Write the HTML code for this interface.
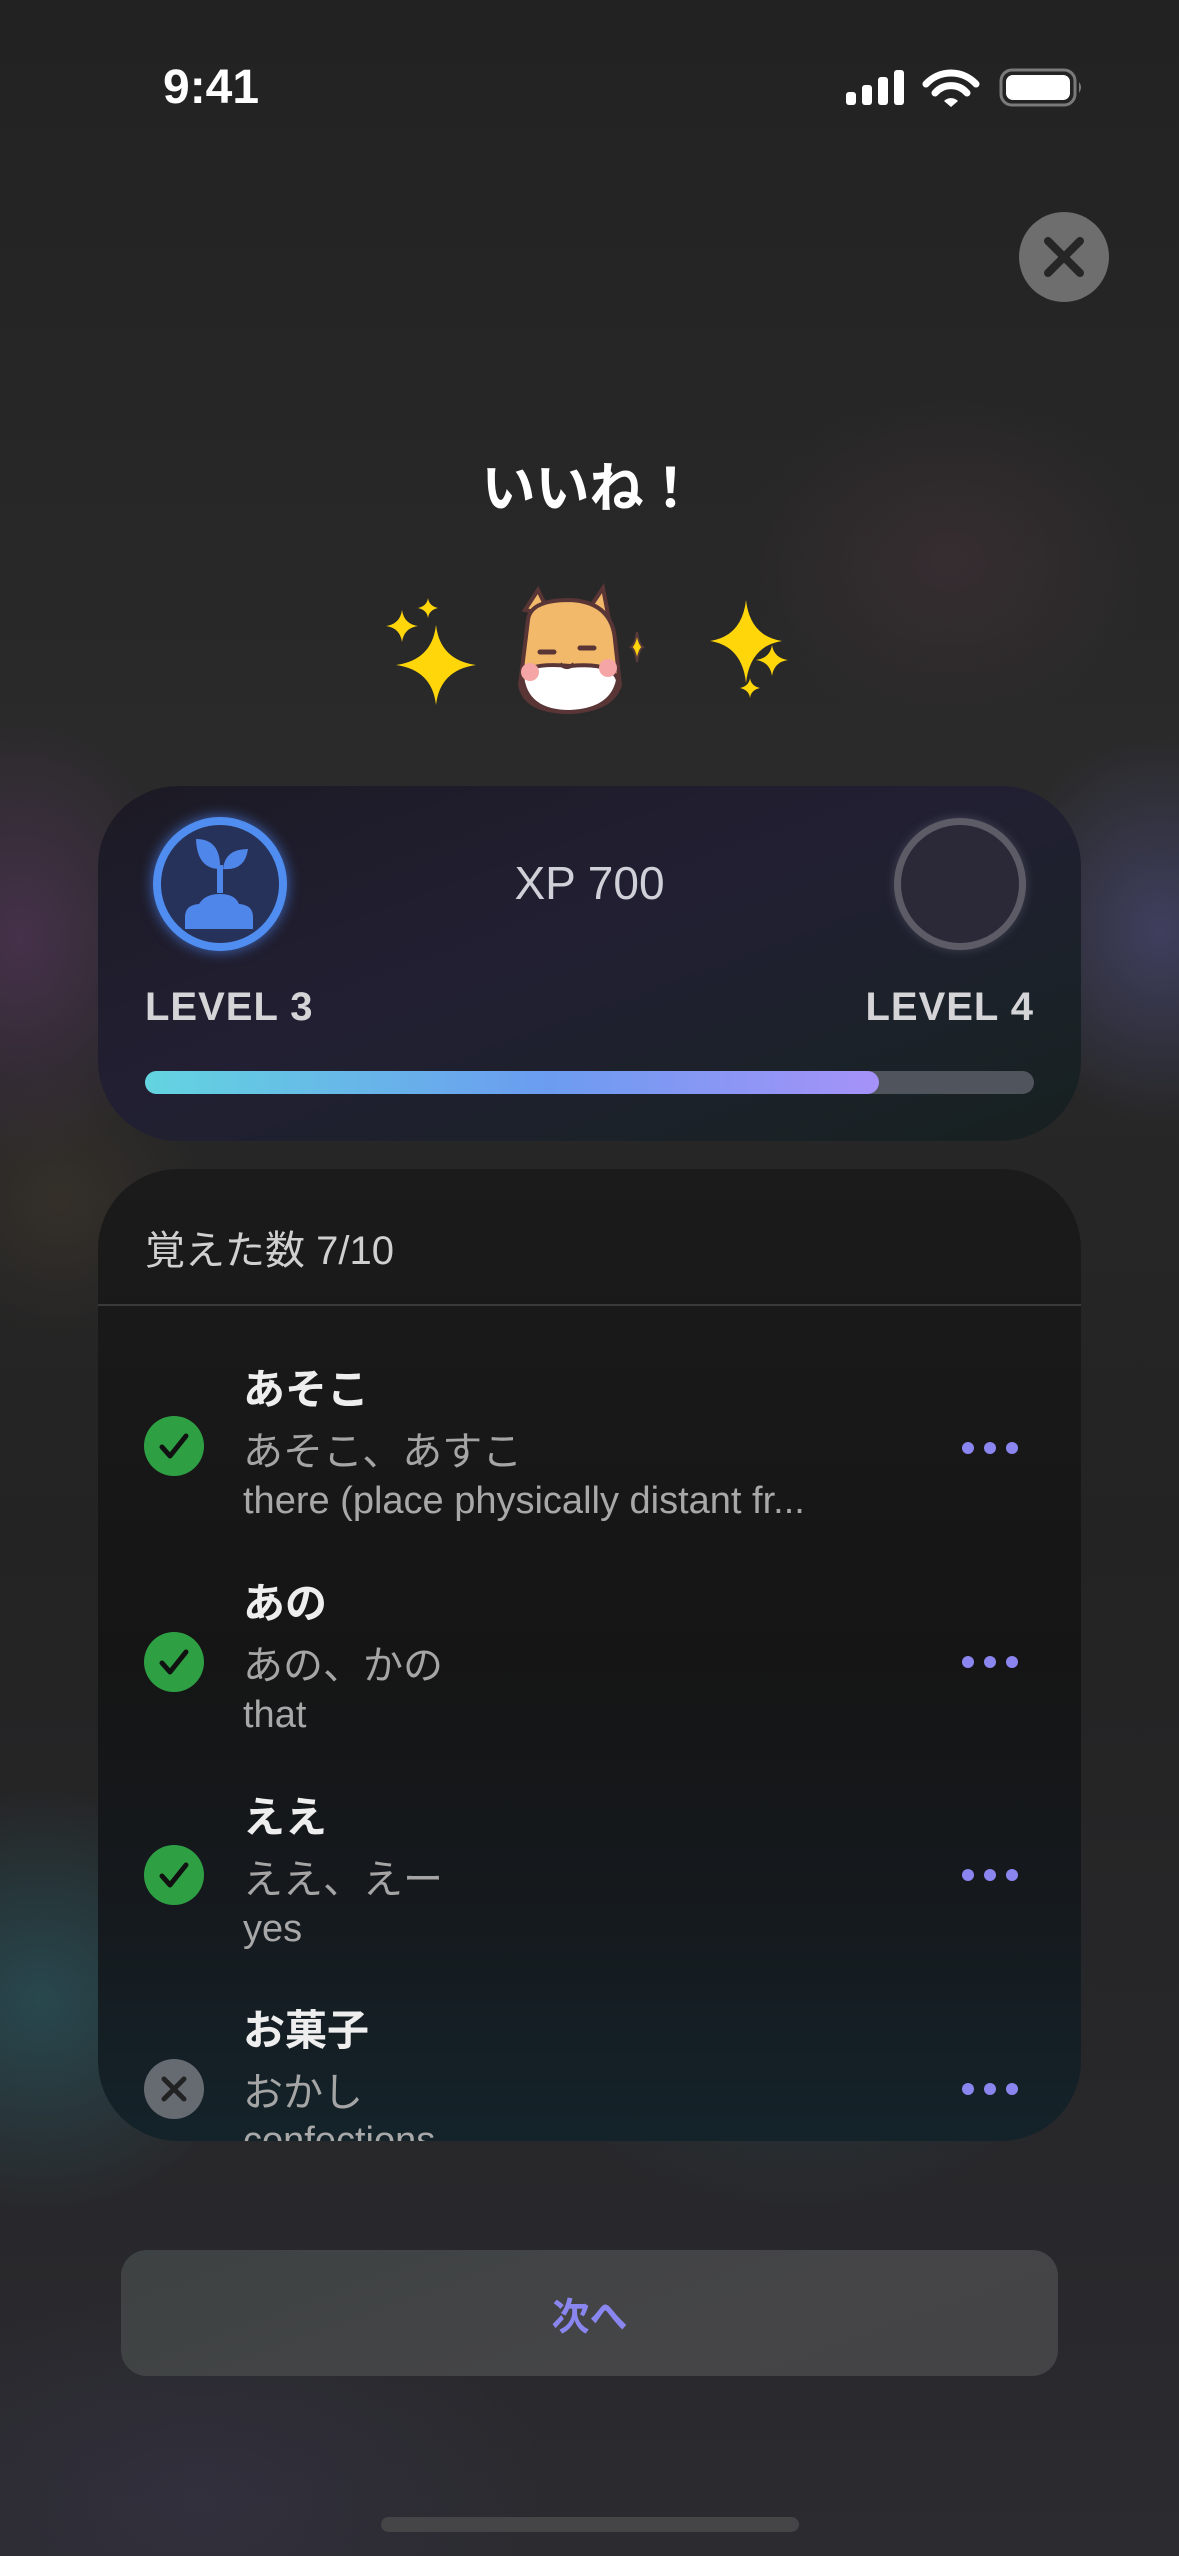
<!DOCTYPE html>
<html><head><meta charset="utf-8">
<style>
*{margin:0;padding:0;box-sizing:border-box}
html,body{width:1179px;height:2556px;overflow:hidden}
body{position:relative;background:#242424;font-family:"Liberation Sans","Noto Sans CJK JP",sans-serif;color:#fff}
.bg{position:absolute;inset:0;background:
radial-gradient(ellipse 300px 240px at 950px 560px,rgba(80,55,65,.35),transparent 70%),
radial-gradient(ellipse 240px 320px at 20px 940px,rgba(105,60,115,.45),transparent 70%),
radial-gradient(ellipse 240px 280px at 1160px 930px,rgba(90,90,160,.45),transparent 70%),
radial-gradient(ellipse 200px 200px at 60px 1200px,rgba(110,85,55,.2),transparent 70%),
radial-gradient(ellipse 320px 300px at 40px 2000px,rgba(40,105,115,.5),transparent 70%),
radial-gradient(ellipse 420px 300px at 800px 2000px,rgba(30,80,90,.35),transparent 70%),
radial-gradient(ellipse 500px 300px at 200px 2500px,rgba(60,55,80,.4),transparent 70%),
linear-gradient(#222 0%,#2a2a2a 30%,#232323 60%,#2b2b30 100%)}
.abs{position:absolute}
.card{position:absolute;left:98px;width:983px;border-radius:80px;overflow:hidden}
.lvl{font-weight:bold;font-size:40px;color:#d5d5d8;letter-spacing:1px}
.row .w{position:absolute;left:243px;font-size:42px;font-weight:bold;color:#eee}
.row .r{position:absolute;left:243px;font-size:40px;color:#a5a5a5}
.row .m{position:absolute;left:243px;font-size:38px;color:#a8a8a8}
.dots{position:absolute;left:962px;display:flex;gap:10px}
.dots i{width:12px;height:12px;border-radius:50%;background:#8b85f0;display:block}
</style></head><body>
<div class="bg"></div>
<div class="abs" style="left:163px;top:60px;font-size:48px;font-weight:bold">9:41</div>
<svg class="abs" style="left:844px;top:68px" width="240" height="42" viewBox="0 0 240 42">
<rect x="2" y="24" width="10" height="13" rx="3" fill="#fff"/>
<rect x="18" y="17" width="10" height="20" rx="3" fill="#fff"/>
<rect x="34" y="9" width="10" height="28" rx="3" fill="#fff"/>
<rect x="50" y="2" width="10" height="35" rx="3" fill="#fff"/>
<path d="M82 16 A34 34 0 0 1 132 16" stroke="#fff" stroke-width="7" fill="none" stroke-linecap="round"/>
<path d="M91 25 A21 21 0 0 1 123 25" stroke="#fff" stroke-width="7" fill="none" stroke-linecap="round"/>
<path d="M100 33 L107 39 L114 33 A10 10 0 0 0 100 33Z" fill="#fff"/>
<rect x="157" y="2" width="74" height="35" rx="11" fill="none" stroke="#7a7a7a" stroke-width="3"/>
<rect x="162" y="7" width="64" height="25" rx="7" fill="#fff"/>
<path d="M235 14 Q239 19 235 25Z" fill="#7a7a7a"/>
</svg>
<div class="abs" style="left:1019px;top:212px;width:90px;height:90px;border-radius:50%;background:#6e6e6e"></div>
<svg class="abs" style="left:1019px;top:212px" width="90" height="90"><path d="M29 29 L61 61 M61 29 L29 61" stroke="#262626" stroke-width="8" stroke-linecap="round"/></svg>
<div class="abs" style="left:0;width:1179px;top:444px;text-align:center;font-size:54px;font-weight:bold">いいね！</div>
<svg class="abs" style="left:380px;top:580px" width="420" height="140" viewBox="0 0 420 140">
<g fill="#ffd60a">
<path d="M56 45 Q60 80 96 85 Q60 90 56 125 Q52 90 16 85 Q52 80 56 45Z"/>
<path d="M22 30 Q24 44 38 46 Q24 48 22 62 Q20 48 6 46 Q20 44 22 30Z"/>
<path d="M48 18 Q49 26 58 28 Q49 30 48 38 Q47 30 38 28 Q47 26 48 18Z"/>
<path d="M366 20 Q370 56 402 61 Q370 66 366 103 Q362 66 330 61 Q362 56 366 20Z"/>
<path d="M392 65 Q394 78 408 80 Q394 82 392 96 Q390 82 376 80 Q390 78 392 65Z"/>
<path d="M370 98 Q371 106 380 108 Q371 110 370 118 Q369 110 360 108 Q369 106 370 98Z"/>
<path d="M257 52 Q259 65 263 67 Q259 69 257 82 Q255 69 251 67 Q255 65 257 52Z" stroke="#5a3a3a" stroke-width="2"/>
</g>
<g stroke="#5a3535" stroke-width="4">
<path d="M145 30 L158 10 L170 35 Z" fill="#f3b96a"/>
<path d="M205 35 L223 8 L230 45 Z" fill="#f3b96a"/>
<path d="M148 40 Q150 20 190 20 Q232 22 235 60 L240 105 Q232 130 190 132 Q145 132 140 105 Z" fill="#f3b96a"/>
<path d="M142 95 Q150 82 190 86 Q232 82 238 100 Q232 130 190 132 Q145 132 142 95Z" fill="#fff"/>
</g>
<circle cx="150" cy="92" r="9" fill="#f5a5a5"/><circle cx="228" cy="88" r="9" fill="#f5a5a5"/>
<path d="M160 72 h14 M200 68 h14" stroke="#5a3535" stroke-width="5" stroke-linecap="round"/>
<path d="M180 84 q7 6 14 0" stroke="#5a3535" stroke-width="4" fill="none"/>
</svg>
<div class="card" style="top:786px;height:355px;background:linear-gradient(160deg,#1c1a24 0%,#221f33 45%,#1a2228 80%,#17201f 100%)"></div>
<div class="abs" style="left:153px;top:817px;width:134px;height:134px;border-radius:50%;border:8px solid #4f8df0;background:#27325a;box-shadow:0 0 14px rgba(80,140,255,.7)"></div>
<svg class="abs" style="left:153px;top:817px" width="134" height="134" viewBox="0 0 134 134">
<path d="M43 22 Q68 22 67 52 Q44 52 43 22Z" fill="#4f86ea"/>
<path d="M70 52 Q72 32 95 32 Q92 54 70 52Z" fill="#4f86ea"/>
<rect x="64" y="48" width="6" height="28" fill="#4f86ea"/>
<path d="M32 112 L32 100 Q32 88 46 87 Q52 77 67 77 Q82 77 86 87 Q100 88 100 100 L100 112Z" fill="#4f86ea"/>
</svg>
<div class="abs" style="left:0;width:1179px;top:856px;text-align:center;font-size:46px;color:#d0d0d8">XP 700</div>
<div class="abs" style="left:894px;top:818px;width:132px;height:132px;border-radius:50%;border:7px solid #5d5b66;background:#2b2837;box-shadow:0 0 10px rgba(120,120,140,.4)"></div>
<div class="abs lvl" style="left:145px;top:985px">LEVEL 3</div>
<div class="abs lvl" style="right:145px;top:985px">LEVEL 4</div>
<div class="abs" style="left:145px;top:1071px;width:889px;height:23px;border-radius:12px;background:#50545c"></div>
<div class="abs" style="left:145px;top:1071px;width:734px;height:23px;border-radius:12px;background:linear-gradient(90deg,#63d4e0,#6b9cf0 55%,#a692f8)"></div>
<div class="card" style="top:1169px;height:972px;background:linear-gradient(180deg,#1b1b1b 0%,#151515 50%,#15191d 75%,#14232a 100%)">
  <div style="position:absolute;left:0;right:0;top:135px;height:2px;background:#3a3a3a"></div>
</div>
<div class="abs" style="left:145px;top:1218px;font-size:40px;color:#d0d0d0">覚えた数 7/10</div>
<div class="row">
<div class="w" style="top:1356px">あそこ</div>
<div class="r" style="top:1419px">あそこ、あすこ</div>
<div class="m" style="top:1480px">there (place physically distant fr...</div>
<div class="w" style="top:1570px">あの</div>
<div class="r" style="top:1633px">あの、かの</div>
<div class="m" style="top:1694px">that</div>
<div class="w" style="top:1784px">ええ</div>
<div class="r" style="top:1847px">ええ、えー</div>
<div class="m" style="top:1908px">yes</div>
<div class="w" style="top:1997px">お菓子</div>
<div class="r" style="top:2060px">おかし</div>
</div>
<div class="abs" style="left:243px;top:2118px;width:300px;height:23px;overflow:hidden"><div style="font-size:38px;color:#a8a8a8;margin-top:2px">confections</div></div>
<svg class="abs" style="left:144px;top:1416px" width="60" height="60"><circle cx="30" cy="30" r="30" fill="#2ea043"/><path d="M18 31 L26 40 L42 20" stroke="#111" stroke-width="5" fill="none" stroke-linecap="round" stroke-linejoin="round"/></svg>
<svg class="abs" style="left:144px;top:1632px" width="60" height="60"><circle cx="30" cy="30" r="30" fill="#2ea043"/><path d="M18 31 L26 40 L42 20" stroke="#111" stroke-width="5" fill="none" stroke-linecap="round" stroke-linejoin="round"/></svg>
<svg class="abs" style="left:144px;top:1845px" width="60" height="60"><circle cx="30" cy="30" r="30" fill="#2ea043"/><path d="M18 31 L26 40 L42 20" stroke="#111" stroke-width="5" fill="none" stroke-linecap="round" stroke-linejoin="round"/></svg>
<svg class="abs" style="left:144px;top:2059px" width="60" height="60"><circle cx="30" cy="30" r="30" fill="#666b72"/><path d="M20 20 L40 40 M40 20 L20 40" stroke="#222" stroke-width="5" stroke-linecap="round"/></svg>
<div class="dots" style="top:1442px"><i></i><i></i><i></i></div>
<div class="dots" style="top:1656px"><i></i><i></i><i></i></div>
<div class="dots" style="top:1869px"><i></i><i></i><i></i></div>
<div class="dots" style="top:2083px"><i></i><i></i><i></i></div>
<div class="abs" style="left:121px;top:2250px;width:937px;height:126px;border-radius:26px;background:linear-gradient(160deg,#3d4242,#454547 60%,#444446);display:flex;align-items:center;justify-content:center;font-size:38px;font-weight:bold;color:#8a86f0">次へ</div>
<div class="abs" style="left:381px;top:2517px;width:418px;height:15px;border-radius:8px;background:#454547"></div>
</body></html>
